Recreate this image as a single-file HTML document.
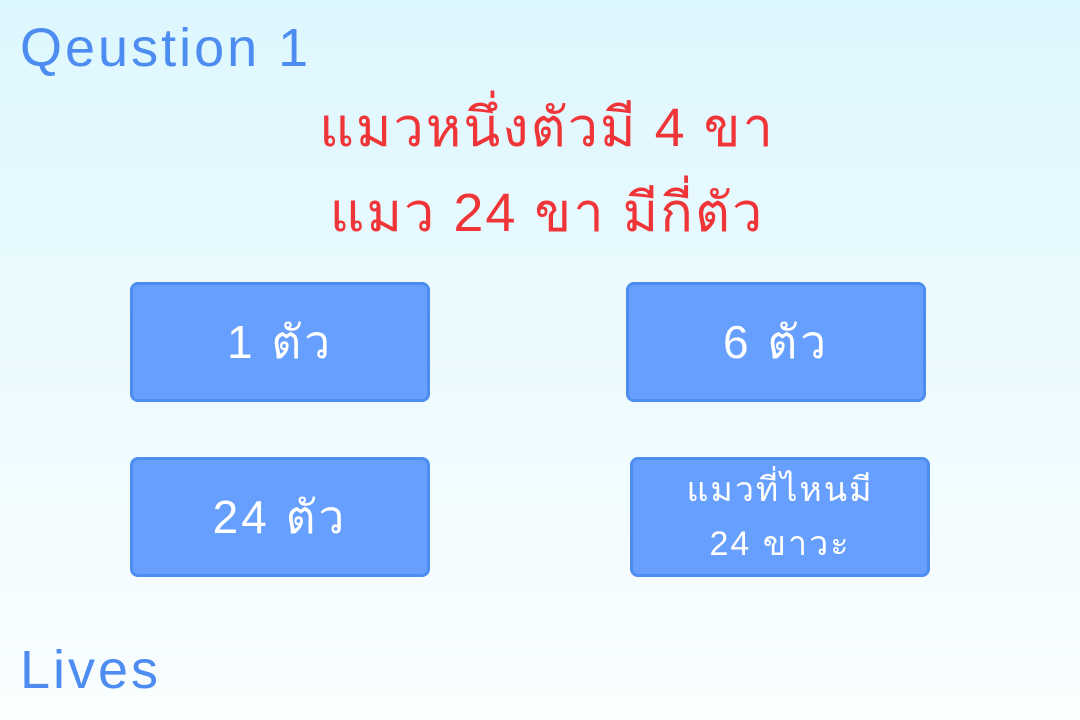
<!DOCTYPE html>
<html><head><meta charset="utf-8"><style>
html,body{margin:0;padding:0}
body{width:1080px;height:720px;position:relative;overflow:hidden;background:linear-gradient(#ddf7fe,#fafeff);font-family:"Liberation Sans","DejaVu Sans",sans-serif}
.t{position:absolute;white-space:nowrap}
.q{left:20px;top:16px;font-size:54px;letter-spacing:3px;color:#4d8cf0;line-height:64px}
.l{left:20px;top:638px;font-size:54px;letter-spacing:3px;color:#4d8cf0;line-height:64px}
.h{left:0;width:1094px;text-align:center;color:#ef3538;font-size:54px;letter-spacing:2px;line-height:60px}
.b{position:absolute;width:294px;height:114px;border:3px solid #4d8cf0;background:#669ffe;border-radius:8px;color:#fff;font-size:46px;letter-spacing:3px;display:flex;align-items:center;justify-content:center;text-align:center;box-sizing:content-box}
</style></head><body>
<div class="t q">Qeustion 1</div>
<div class="t h" style="top:98px">แมวหนึ่งตัวมี 4 ขา</div>
<div class="t h" style="top:183px">แมว 24 ขา มีกี่ตัว</div>
<div class="b" style="left:130px;top:282px">1 ตัว</div>
<div class="b" style="left:626px;top:282px">6 ตัว</div>
<div class="b" style="left:130px;top:457px">24 ตัว</div>
<div class="b" style="left:630px;top:457px;font-size:34px;letter-spacing:2px;line-height:54px">แมวที่ไหนมี<br>24 ขาวะ</div>
<div class="t l">Lives</div>
</body></html>
